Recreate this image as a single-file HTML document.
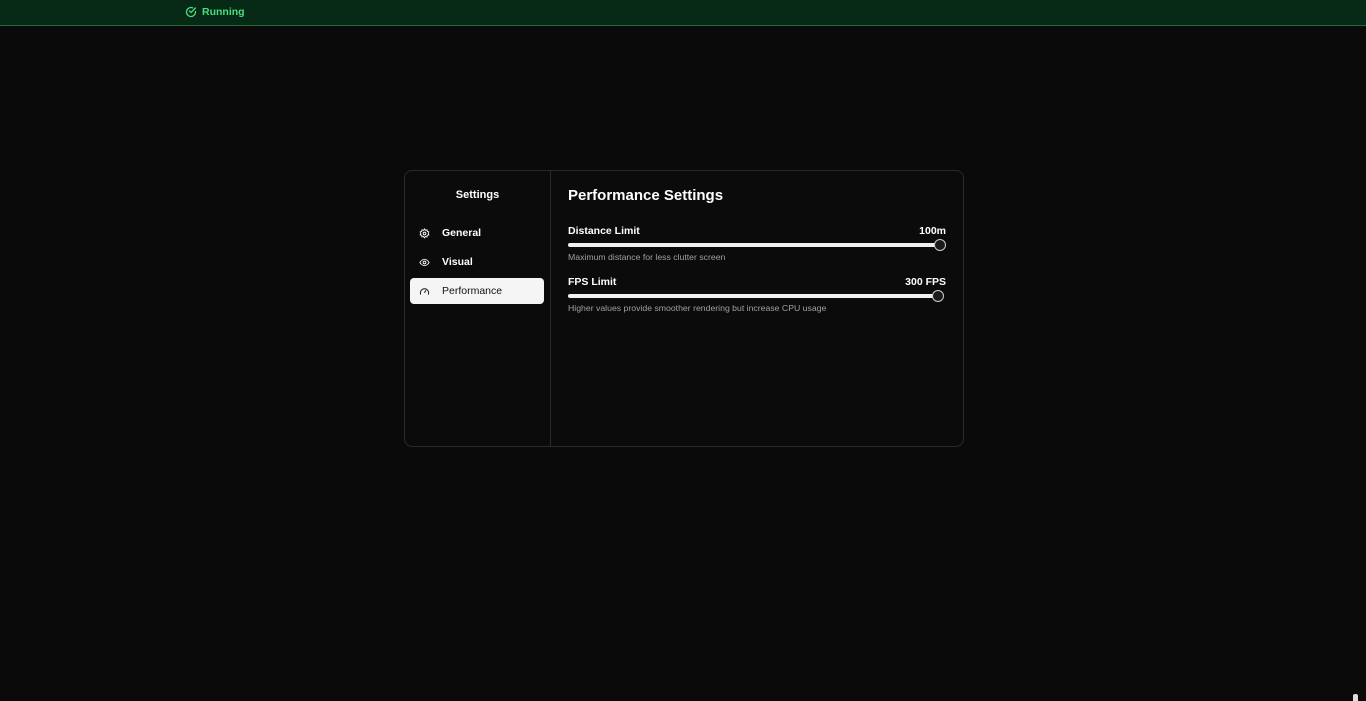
<!DOCTYPE html>
<html><head><meta charset="utf-8"><style>
*{margin:0;padding:0;box-sizing:border-box}
body{width:1366px;height:701px;background:#0a0a0a;font-family:"Liberation Sans",sans-serif;color:#fff;position:relative;overflow:hidden}
.top{position:absolute;left:0;top:0;width:1366px;height:26px;background:#062a15;border-bottom:1px solid #1f6b3a}
.run{position:absolute;left:185px;top:6px;color:#4ade80;font-size:10.5px;font-weight:bold;display:flex;align-items:center;gap:5px}
.card{position:absolute;left:404px;top:170px;width:560px;height:277px;border:1px solid #2a2a2a;border-radius:8px;background:#0b0b0b}
.side{position:absolute;left:0;top:0;width:146px;height:100%;border-right:1px solid #2a2a2a}
.side h3{position:absolute;top:18px;width:100%;text-align:center;font-size:11px;font-weight:bold}
.item{position:absolute;left:5px;width:134px;height:26px;border-radius:4px;display:flex;align-items:center;font-size:10.5px;font-weight:bold}
.item svg{position:absolute;left:9px}
.item span{position:absolute;left:32px}
.item.act{background:#f5f5f5;color:#111;font-weight:normal}
.main{position:absolute;left:163px;top:0;right:17px}
.main h2{position:absolute;top:16px;font-size:15px;font-weight:bold}
.row{position:absolute;left:0;right:0;font-size:10.5px;font-weight:bold}
.row .v{position:absolute;right:0;top:0;font-weight:bold;font-size:10.5px}
.bar{position:absolute;left:0;right:6px;top:18px;height:4px;background:#f0f0f0;border-radius:2px}
.th{position:absolute;top:14px;width:12px;height:12px;border-radius:50%;border:1.5px solid #ccc;background:#1a1a1a}
.d{position:absolute;top:27px;font-size:8.7px;font-weight:normal;color:#a0a0a0}
</style></head><body>
<div class="top"><div class="run"><svg width="12" height="12" viewBox="0 0 24 24" fill="none" stroke="#4ade80" stroke-width="2.5" stroke-linecap="round"><path d="M21 11.1V12a9 9 0 1 1-5.3-8.2"/><path d="M21 4 12 13l-3-3"/></svg>Running</div></div>
<div class="card">
<div class="side"><h3>Settings</h3>
<div class="item" style="top:49px"><svg width="11" height="11" viewBox="0 0 24 24" fill="none" stroke="#fff" stroke-width="2"><circle cx="12" cy="12" r="3"/><path d="M12 2l2 3 3.5-1 .5 3.5 3.5 1-1.5 3.5 1.5 3-3.5 1-.5 3.5-3.5-1-2 3-2-3-3.5 1-.5-3.5-3.5-1 1.5-3-1.5-3.5 3.5-1 .5-3.5 3.5 1z"/></svg><span>General</span></div>
<div class="item" style="top:78px"><svg width="11" height="11" viewBox="0 0 24 24" fill="none" stroke="#fff" stroke-width="2"><path d="M2 12s4-7 10-7 10 7 10 7-4 7-10 7S2 12 2 12z"/><circle cx="12" cy="12" r="3"/></svg><span>Visual</span></div>
<div class="item act" style="top:107px"><svg width="11" height="11" viewBox="0 0 24 24" fill="none" stroke="#111" stroke-width="2" stroke-linecap="round"><path d="M3.5 18a9 9 0 1 1 17 0"/><path d="M12 14l3-4"/></svg><span>Performance</span></div>
</div>
<div class="main"><h2>Performance Settings</h2>
<div class="row" style="top:54px">Distance Limit<span class="v">100m</span><div class="bar"></div><div class="th" style="left:366px"></div><div class="d">Maximum distance for less clutter screen</div></div>
<div class="row" style="top:105px">FPS Limit<span class="v">300 FPS</span><div class="bar"></div><div class="th" style="left:364px"></div><div class="d">Higher values provide smoother rendering but increase CPU usage</div></div>
</div></div>
<div style="position:absolute;left:1353px;top:694px;width:5px;height:7px;background:#ddd;border-radius:2px 2px 0 0"></div>
</body></html>
